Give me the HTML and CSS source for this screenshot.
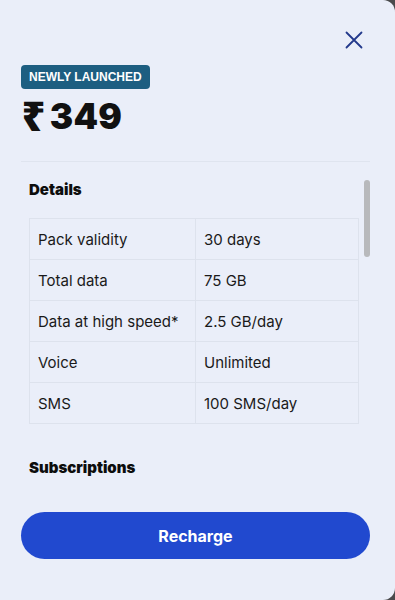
FILE: index.html
```html
<!DOCTYPE html>
<html lang="en">
<head>
<meta charset="utf-8">
<title>Plan details</title>
<link rel="stylesheet" href="styles.css">
</head>
<body>
<div class="panel">
  <div class="header">
    <button class="close" aria-label="Close">
      <svg width="18" height="18" viewBox="0 0 18 18"><path d="M1.5 1.5 L16.5 16.5 M16.5 1.5 L1.5 16.5" stroke="#23398c" stroke-width="1.8" fill="none" stroke-linecap="round"/></svg>
    </button>
  </div>
  <div class="badge">NEWLY LAUNCHED</div>
  <div class="price"><span class="rupee">₹</span>349</div>
  <div class="divider"></div>
  <div class="scroll">
    <div class="scroll-content">
      <h3 class="section-title">Details</h3>
      <table class="details">
        <tr><td>Pack validity</td><td>30 days</td></tr>
        <tr><td>Total data</td><td>75 GB</td></tr>
        <tr><td>Data at high speed*</td><td>2.5 GB/day</td></tr>
        <tr><td>Voice</td><td>Unlimited</td></tr>
        <tr><td>SMS</td><td>100 SMS/day</td></tr>
      </table>
      <h3 class="section-title subs">Subscriptions</h3>
    </div>
    <div class="thumb"></div>
  </div>
  <button class="recharge">Recharge</button>
</div>
</body>
</html>
```
FILE: styles.css
```css
html, body {
  margin: 0;
  padding: 0;
  background: #4a4a4c;
}
.panel {
  width: 395px;
  height: 600px;
  box-sizing: border-box;
  background: #eaeef9;
  border-radius: 0 12px 12px 0;
  padding: 0 25px 0 21px;
  display: flex;
  flex-direction: column;
  font-family: Inter, "Liberation Sans", sans-serif;
  color: #161616;
}
.header {
  display: flex;
  justify-content: flex-end;
  padding-top: 28px;
}
.close {
  width: 24px;
  height: 24px;
  padding: 0;
  margin-right: 4px;
  border: 0;
  background: transparent;
  display: flex;
  align-items: center;
  justify-content: center;
}
.badge {
  align-self: flex-start;
  margin-top: 13px;
  height: 24px;
  line-height: 24px;
  padding: 0 8px;
  background: #1d5e81;
  color: #ffffff;
  border-radius: 4px;
  font-family: "Liberation Sans", Arial, sans-serif;
  font-weight: 700;
  font-size: 12px;
  letter-spacing: 0;
}
.price {
  margin-top: 5px;
  font-size: 35px;
  line-height: 44px;
  height: 44px;
  font-weight: 900;
  color: #111111;
  padding-left: 1px;
  letter-spacing: 0.3px;
}
.rupee {
  display: inline-block;
  margin-right: 4px;
  font-family: "Noto Sans", "DejaVu Sans", sans-serif;
  font-size: 40px;
  line-height: 44px;
  vertical-align: top;
  font-weight: 900;
}
.divider {
  margin-top: 23px;
  height: 1px;
  background: #dfe4ef;
}
.scroll {
  position: relative;
  flex: 1;
  overflow: hidden;
}
.scroll-content {
  padding: 18px 11px 0 8px;
}
.section-title {
  margin: 0;
  font-size: 15px;
  line-height: 20px;
  font-weight: 900;
  color: #0d0d0d;
}
.details {
  margin-top: 18px;
  width: 100%;
  border-collapse: collapse;
  font-size: 15px;
}
.details td {
  height: 40px;
  padding: 0 8px;
  border: 1px solid #dde2ed;
  color: #1a1a1a;
}
.details td:first-child {
  width: 149px;
}
.subs {
  margin-top: 34px;
}
.thumb {
  position: absolute;
  right: 0;
  top: 18px;
  width: 6px;
  height: 77px;
  border-radius: 3px;
  background: #b8b9bc;
}
.recharge {
  margin: 15px 0 41px;
  height: 47px;
  border: 0;
  border-radius: 24px;
  background: #2149cf;
  color: #ffffff;
  font-family: Inter, "Liberation Sans", sans-serif;
  font-size: 16px;
  font-weight: 700;
}
```
